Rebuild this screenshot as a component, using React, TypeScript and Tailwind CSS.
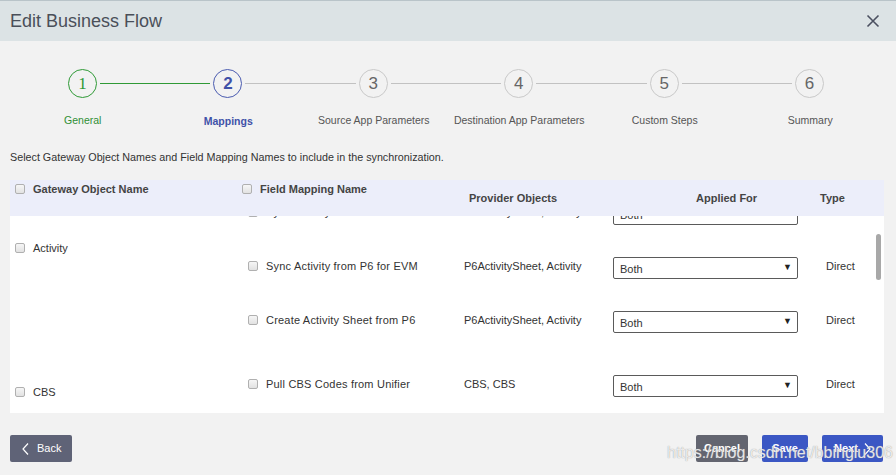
import React from "react";

function Check() {
  return (
    <span className="inline-block w-[10px] h-[10px] rounded-[2px] border border-[#b0b0b0] bg-gradient-to-b from-[#f6f6f6] to-[#e2e2e2] shrink-0" />
  );
}

function Select() {
  return (
    <div className="w-[185px] h-[22px] border border-[#5a5a5a] rounded-[2px] bg-white flex items-center justify-between pl-[6px] pr-[5px]">
      <span className="text-[11px] text-[#333] mt-[3px]">Both</span>
      <span className="text-[9px] text-[#222]">▼</span>
    </div>
  );
}

function Row({ name, provider }: { name: string; provider: string }) {
  return (
    <div className="h-[54px] flex items-start pt-[24px]">
      <div className="w-[222px] h-[14px] mt-[2px] flex items-center pl-[6px] gap-[8px]">
        <Check />
        <span className="text-[11px] text-[#333] tracking-[0.2px]">{name}</span>
      </div>
      <div className="w-[149px] h-[14px] mt-[2px] flex items-center text-[11px] text-[#333]">{provider}</div>
      <Select />
      <div className="h-[14px] mt-[2px] pl-[28px] flex items-center text-[11px] text-[#333]">Direct</div>
    </div>
  );
}

const steps = [
  { n: "1", label: "General", state: "done" },
  { n: "2", label: "Mappings", state: "active" },
  { n: "3", label: "Source App Parameters", state: "todo" },
  { n: "4", label: "Destination App Parameters", state: "todo" },
  { n: "5", label: "Custom Steps", state: "todo" },
  { n: "6", label: "Summary", state: "todo" },
];

function Circle({ n, state }: { n: string; state: string }) {
  if (state === "done")
    return (
      <div className="w-[29px] h-[29px] rounded-full border border-[#2f9a36] flex items-center justify-center text-[17px] text-[#2f9a36] font-['Liberation_Serif',serif] shrink-0">
        {n}
      </div>
    );
  if (state === "active")
    return (
      <div className="w-[29px] h-[29px] rounded-full border border-[#4a5bb0] flex items-center justify-center text-[17px] font-bold text-[#3f51a8] shrink-0">
        {n}
      </div>
    );
  return (
    <div className="w-[29px] h-[29px] rounded-full border border-[#c9c9c9] flex items-center justify-center text-[17px] text-[#666] shrink-0">
      {n}
    </div>
  );
}

export default function App() {
  return (
    <div className="w-[896px] h-[475px] bg-[#f2f2f2] font-['Liberation_Sans',Arial,sans-serif] relative overflow-hidden">
      {/* Header */}
      <div className="h-[41px] bg-[#dce3e5] border-t border-[#b9c4c9] flex items-center justify-between pl-[10px] pr-[16px]">
        <span className="text-[18px] text-[#4a4f59]">Edit Business Flow</span>
        <svg width="14" height="14" viewBox="0 0 14 14" className="text-[#4b5060]">
          <path d="M1.5 1.5 L12.5 12.5 M12.5 1.5 L1.5 12.5" stroke="currentColor" strokeWidth="1.6" />
        </svg>
      </div>

      {/* Stepper */}
      <div className="mt-[28px] flex items-center pl-[68px] pr-[72px]">
        {steps.map((s, i) => (
          <React.Fragment key={s.n}>
            <Circle n={s.n} state={s.state} />
            {i < steps.length - 1 && (
              <div className={i === 0 ? "flex-1 h-[1px] mx-[3px] bg-[#2f9a36]" : "flex-1 h-[1px] mx-[3px] bg-[#c2c2c2]"} />
            )}
          </React.Fragment>
        ))}
      </div>
      <div className="mt-[15px] mx-[10px] w-[873px] grid grid-cols-6 text-center text-[10.5px] leading-[14px]">
        <span className="text-[#2f8f35]">General</span>
        <span className="text-[#3f51a8] font-bold mt-[1px]">Mappings</span>
        <span className="text-[#555]">Source App Parameters</span>
        <span className="text-[#555]">Destination App Parameters</span>
        <span className="text-[#555]">Custom Steps</span>
        <span className="text-[#555]">Summary</span>
      </div>

      <div className="mt-[22px] pl-[10px] text-[10.75px] leading-[14px] text-[#333]">
        Select Gateway Object Names and Field Mapping Names to include in the synchronization.
      </div>

      {/* Table */}
      <div className="mt-[16px] ml-[10px] w-[874px]">
        <div className="h-[36px] bg-[#eceefa] flex items-start text-[11px] font-bold text-[#444]">
          <div className="w-[232px] h-[14px] mt-[2px] pl-[5px] flex items-center gap-[8px]">
            <Check />
            <span>Gateway Object Name</span>
          </div>
          <div className="w-[222px] h-[14px] mt-[2px] flex items-center gap-[8px]">
            <Check />
            <span>Field Mapping Name</span>
          </div>
          <div className="w-[149px] h-[14px] mt-[11px] pl-[5px] flex items-center">Provider Objects</div>
          <div className="w-[185px] h-[14px] mt-[11px] pl-[83px] flex items-center">Applied For</div>
          <div className="h-[14px] mt-[11px] pl-[22px] flex items-center">Type</div>
        </div>
        <div className="h-[197px] bg-white overflow-hidden relative">
          <div className="mt-[-37px]">
            <div className="flex">
              <div className="w-[232px]" />
              <div>
                <Row name="Sync Activity Sheet to P6" provider="P6ActivitySheet, Activity" />
              </div>
            </div>
            <div className="flex pb-[10px]">
              <div className="w-[232px] pt-[8px]">
                <div className="h-[14px] pl-[5px] flex items-center gap-[8px] text-[11px] text-[#333]">
                  <Check />
                  <span>Activity</span>
                </div>
              </div>
              <div>
                <Row name="Sync Activity from P6 for EVM" provider="P6ActivitySheet, Activity" />
                <Row name="Create Activity Sheet from P6" provider="P6ActivitySheet, Activity" />
              </div>
            </div>
            <div className="flex">
              <div className="w-[232px] pt-[34px]">
                <div className="h-[14px] pl-[5px] flex items-center gap-[8px] text-[11px] text-[#333]">
                  <Check />
                  <span>CBS</span>
                </div>
              </div>
              <div>
                <Row name="Pull CBS Codes from Unifier" provider="CBS, CBS" />
              </div>
            </div>
          </div>
          <div className="absolute right-[3px] top-[18px] w-[5px] h-[46px] rounded-[3px] bg-[#a8a8a8]" />
        </div>
      </div>

      {/* Footer */}
      <div className="mt-[22px] pl-[10px] pr-[13px] flex justify-between items-start">
        <button className="h-[27px] w-[62px] rounded-[2px] bg-[#5f6377] text-white text-[11px] flex items-center pl-[12px] gap-[8px]">
          <svg width="7" height="12" viewBox="0 0 7 12">
            <path d="M6 0.5 L1 6 L6 11.5" stroke="white" strokeWidth="1.2" fill="none" />
          </svg>
          <span>Back</span>
        </button>
        <div className="flex gap-[14px]">
          <button className="h-[27px] w-[52px] rounded-[2px] bg-[#636570] text-white text-[11px] font-bold flex items-center justify-center">
            Cancel
          </button>
          <button className="h-[27px] w-[46px] rounded-[2px] bg-[#3b57c4] text-white text-[11px] font-bold flex items-center justify-center">
            Save
          </button>
          <button className="h-[27px] w-[61px] rounded-[2px] bg-[#3b57c4] text-white text-[11px] font-bold flex items-center justify-center gap-[6px]">
            <span>Next</span>
            <svg width="7" height="12" viewBox="0 0 7 12">
              <path d="M1 0.5 L6 6 L1 11.5" stroke="white" strokeWidth="1.2" fill="none" />
            </svg>
          </button>
        </div>
      </div>

      <div className="absolute left-[667px] top-[441px] text-[16px] text-white/80 [text-shadow:0_0_1px_#888] pointer-events-none">
        https://blog.csdn.net/bbinglu306
      </div>
    </div>
  );
}
